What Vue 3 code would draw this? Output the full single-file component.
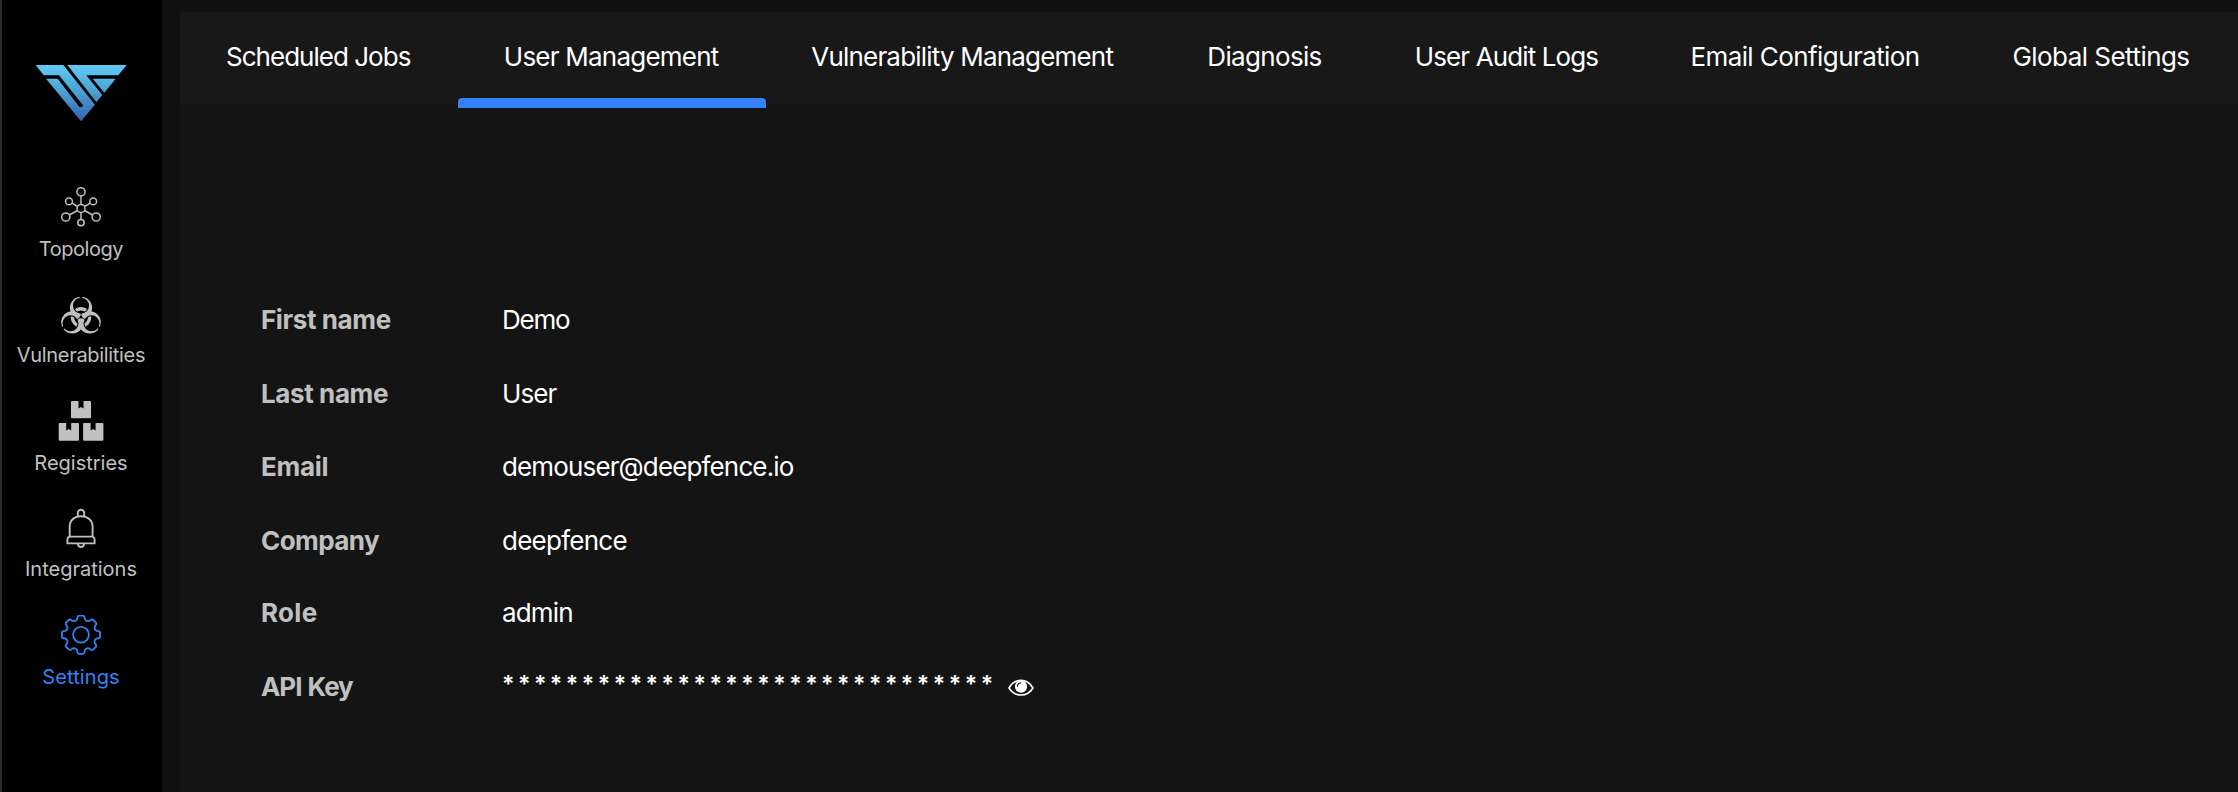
<script setup>
import { ref } from 'vue'

const tabs = ['Scheduled Jobs', 'User Management', 'Vulnerability Management', 'Diagnosis', 'User Audit Logs', 'Email Configuration', 'Global Settings']
const activeTab = ref('User Management')

const profile = [
  { id: 'first', label: 'First name', value: 'Demo' },
  { id: 'last', label: 'Last name', value: 'User' },
  { id: 'email', label: 'Email', value: 'demouser@deepfence.io' },
  { id: 'company', label: 'Company', value: 'deepfence' },
  { id: 'role', label: 'Role', value: 'admin' }
]
const maskedKey = Array(31).fill('*').join(' ')

// Outline of an eight-toothed cog around the origin.
function cogPath() {
  const profilePoints = [[14.2, -4.9], [15.6, -3.9], [18.2, -3.3], [19.1, -2.4], [19.1, 2.4], [18.2, 3.3], [15.6, 3.9], [14.2, 4.9]]
  let d = ''
  for (let k = 0; k < 8; k++) {
    const a = (k * Math.PI) / 4
    profilePoints.forEach(([r, t], i) => {
      const x = (r * Math.cos(a) - t * Math.sin(a)).toFixed(2)
      const y = (r * Math.sin(a) + t * Math.cos(a)).toFixed(2)
      d += (k === 0 && i === 0 ? 'M' : 'L') + x + ' ' + y
    })
  }
  return d + 'Z'
}
const cog = cogPath()
</script>

<template>
  <div class="app">
    <aside class="sidebar">
      <svg class="logo" viewBox="105 190 276 174" width="92" height="58">
        <defs>
          <linearGradient id="brand" x1="0" y1="193" x2="0" y2="362" gradientUnits="userSpaceOnUse">
            <stop offset="0" stop-color="#60cbf3" />
            <stop offset="0.4" stop-color="#4ea8da" />
            <stop offset="1" stop-color="#3263a9" />
          </linearGradient>
        </defs>
        <g fill="url(#brand)">
          <path d="M107 193H190L285 312L243 362L138 234H173L238 318Q242 322 250 315L177 224H131Z" />
          <path d="M202 193H380L355 224H259L307 283L289 305Z" />
          <path d="M278 234H347L313 276Z" />
        </g>
      </svg>

      <nav>
        <a class="item topology">
          <svg viewBox="0 0 48 40" fill="none" stroke="currentColor" stroke-width="1.5">
            <circle cx="24" cy="21.5" r="4" />
            <circle cx="24" cy="4.8" r="4.1" />
            <circle cx="12" cy="14.4" r="3.4" />
            <circle cx="36.2" cy="14.4" r="3.4" />
            <circle cx="8.8" cy="30" r="4.1" />
            <circle cx="39.2" cy="30" r="4.1" />
            <circle cx="24" cy="35.6" r="3.2" />
            <path d="M24 8.9V17.5M24 25.5V32.4M15 16.2L20.5 19.5M33.2 16.2L27.5 19.5M12.4 28L20.4 23.5M35.6 28L27.6 23.5" />
          </svg>
          <span>Topology</span>
        </a>
        <a class="item vulnerabilities">
          <svg viewBox="0 0 48 40">
            <defs>
              <mask id="lobes" maskUnits="userSpaceOnUse" x="0" y="0" width="48" height="40">
                <g fill="#fff">
                  <circle cx="24" cy="13.8" r="11.1" />
                  <circle cx="15.3" cy="28.3" r="11.1" />
                  <circle cx="32.7" cy="28.3" r="11.1" />
                </g>
                <g fill="#000">
                  <circle cx="24" cy="11.7" r="8" />
                  <circle cx="13.5" cy="29.35" r="8" />
                  <circle cx="34.5" cy="29.35" r="8" />
                  <circle cx="24" cy="23.2" r="1.4" />
                </g>
                <path d="M24 23.2V17M24 23.2L18.5 26.4M24 23.2L29.5 26.4" stroke="#000" stroke-width="0.8" />
                <path d="M24 8V0M11 31L3 35.6M37 31L45 35.6" stroke="#000" stroke-width="2.4" />
              </mask>
              <clipPath id="hollows">
                <circle cx="24" cy="11.7" r="7" />
                <circle cx="13.5" cy="29.35" r="7" />
                <circle cx="34.5" cy="29.35" r="7" />
              </clipPath>
            </defs>
            <rect width="48" height="40" fill="currentColor" mask="url(#lobes)" />
            <circle cx="24" cy="23.4" r="8.6" fill="none" stroke="currentColor" stroke-width="3.4" clip-path="url(#hollows)" />
          </svg>
          <span>Vulnerabilities</span>
        </a>
        <a class="item registries">
          <svg viewBox="0 0 48 40" fill="currentColor">
            <path d="M15 0H21.5V7.4L24 6L26.5 7.4V0H33Q34 0 34 1V16.2Q34 17.2 33 17.2H15Q14 17.2 14 16.2V1Q14 0 15 0Z" />
            <path d="M2.7 22H9.2V29.4L11.7 28L14.2 29.4V22H21Q22 22 22 23V38.7Q22 39.7 21 39.7H2.7Q1.7 39.7 1.7 38.7V23Q1.7 22 2.7 22Z" />
            <path d="M27.1 22H33.6V29.4L36.1 28L38.6 29.4V22H45.4Q46.4 22 46.4 23V38.7Q46.4 39.7 45.4 39.7H27.1Q26.1 39.7 26.1 38.7V23Q26.1 22 27.1 22Z" />
          </svg>
          <span>Registries</span>
        </a>
        <a class="item integrations">
          <svg viewBox="0 0 48 40" fill="none" stroke="currentColor" stroke-width="1.9" stroke-linejoin="round">
            <path d="M12.7 28.6V18.5C12.7 12 17.5 8.2 24 8.2S35.6 12 35.6 18.5V28.6" />
            <path d="M20.8 8.6V5A3.2 3.2 0 0 1 27.2 5V8.6" />
            <path d="M12.7 28.6H35.6Q37.6 29.4 37.6 31.5V35.4H10.4V31.5Q10.4 29.4 12.7 28.6Z" />
            <path d="M20.8 35.6A3.2 3.4 0 0 0 27.2 35.6" />
          </svg>
          <span>Integrations</span>
        </a>
        <a class="item settings active">
          <svg viewBox="0 0 48 40" fill="none" stroke="currentColor" stroke-width="1.8" stroke-linejoin="round">
            <g transform="translate(24 19.7)">
              <path :d="cog" />
              <circle r="7.9" />
            </g>
          </svg>
          <span>Settings</span>
        </a>
      </nav>
    </aside>

    <main class="content">
      <div class="tabs">
        <a v-for="tab in tabs" :key="tab" class="tab" :class="{ current: tab === activeTab }" @click="activeTab = tab">{{ tab }}</a>
      </div>

      <dl class="profile">
        <div v-for="row in profile" :key="row.id" class="row" :class="row.id">
          <dt>{{ row.label }}</dt>
          <dd>{{ row.value }}</dd>
        </div>
        <div class="row key">
          <dt>API Key</dt>
          <dd>
            <span class="stars">{{ maskedKey }}</span>
            <svg class="eye" viewBox="0 0 26 18" width="26" height="18">
              <path d="M1 9C7 -1.2 19 -1.2 25 9C19 18.4 7 18.4 1 9Z" fill="none" stroke="#fff" stroke-width="1.6" stroke-linejoin="round" />
              <circle cx="13" cy="7.6" r="6.1" fill="#fff" />
              <path d="M9.4 7.2A3.6 3.6 0 0 1 12.6 3.9" fill="none" stroke="#141414" stroke-width="1.1" stroke-linecap="round" />
            </svg>
          </dd>
        </div>
      </dl>
    </main>
  </div>
</template>

<style>
html, body { background: #101010; overflow: hidden; }
</style>

<style scoped>
.app {
  display: flex;
  width: 2238px;
  height: 792px;
  background: #101010;
  font-family: Inter, "Noto Sans", sans-serif;
  color: #fff;
  overflow: hidden;
}
.sidebar {
  box-sizing: border-box;
  width: 162px;
  flex: none;
  padding-right: 2px;
  border-left: 2px solid #2b2b2b;
  background: #000;
  display: flex;
  flex-direction: column;
  align-items: center;
}
.logo { display: block; margin-top: 64px; }
nav { margin-top: 65px; width: 100%; }
.item {
  display: flex;
  flex-direction: column;
  align-items: center;
  height: 107px;
  color: #c0c0c0;
  font-size: 20px;
  line-height: 24px;
  white-space: nowrap;
}
.item svg { display: block; width: 48px; height: 40px; flex: none; }
.item span { margin-top: 10px; }
.item.active { color: #3182f7; }
.topology span { letter-spacing: -0.45px; }
.vulnerabilities span { letter-spacing: -0.32px; margin-top: 9px; }
.integrations span { margin-top: 9px; }
.settings span { letter-spacing: 0.1px; }

.content { margin-left: 18px; flex: 1; padding-top: 12px; display: flex; flex-direction: column; }
.tabs {
  position: relative;
  z-index: 1;
  display: grid;
  grid-template-columns: 278px 308px 394px 209px 275px 322px 270px;
  height: 92px;
  flex: none;
  background: #181818;
}
.tab {
  height: 96px;
  box-sizing: border-box;
  padding-top: 29px;
  font-size: 26px;
  line-height: 32px;
  text-align: center;
  white-space: nowrap;
  display: flex;
  flex-direction: column;
  align-items: center;
  justify-content: space-between;
}
.tab.current::after { content: ""; width: 100%; height: 10px; border-radius: 4px 4px 0 0; background: #3282f8; }
.tab:nth-child(-n + 3) { text-indent: -1.6px; }
.tab:nth-child(1) { letter-spacing: -0.98px; }
.tab:nth-child(2) { letter-spacing: -0.77px; }
.tab:nth-child(3) { letter-spacing: -0.81px; }
.tab:nth-child(4) { letter-spacing: -0.66px; }
.tab:nth-child(5) { letter-spacing: -0.88px; }
.tab:nth-child(6) { letter-spacing: -0.58px; }
.tab:nth-child(7) { letter-spacing: -0.54px; }

.profile {
  margin: 0;
  flex: 1;
  padding: 200px 0 0 81px;
  background: #141414;
}
.row { display: flex; height: 73.6px; font-size: 26px; line-height: 32px; white-space: nowrap; }
dt { width: 241px; flex: none; font-weight: 700; color: #c0c0c0; }
dd { margin: 0; display: flex; }
.first dt, .last dt { letter-spacing: -0.39px; }
.first dd { letter-spacing: -1.2px; }
.last dd { letter-spacing: -0.9px; }
.email dt { letter-spacing: -0.3px; }
.email dd { letter-spacing: -0.86px; }
.company dt { letter-spacing: -0.57px; }
.company dd { letter-spacing: -0.74px; }
.company { height: 72.4px; }
.role dt { letter-spacing: 0.3px; }
.role dd { letter-spacing: -0.83px; }
.key dt { letter-spacing: -1.05px; word-spacing: 1px; }
.stars { font-size: 23px; font-weight: 600; word-spacing: -2.25px; width: 506px; margin-top: -3px; }
.eye { display: block; margin-top: 8px; }
</style>
